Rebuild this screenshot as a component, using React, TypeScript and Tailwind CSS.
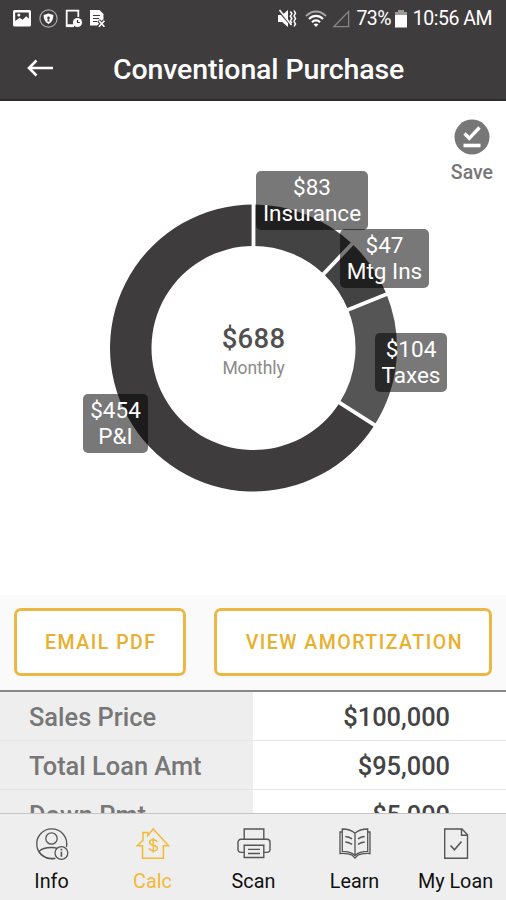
import React from "react";

const FONT = "font-['Roboto','Liberation_Sans',sans-serif]";

interface Slice {
  label: string;
  amount: number;
  color: string;
  place: string;
}

// Drawn clockwise, starting at 12 o'clock
const slices: Slice[] = [
  { label: "Insurance", amount: 83, color: "#434343", place: "left-[256px] top-[70px] w-[112px]" },
  { label: "Mtg Ins", amount: 47, color: "#434343", place: "left-[340px] top-[128px] w-[89px]" },
  { label: "Taxes", amount: 104, color: "#555555", place: "left-[375px] top-[231.5px] w-[72px]" },
  { label: "P&I", amount: 454, color: "#3f3c3d", place: "left-[83px] top-[293px] w-[65px]" },
];

const rows = [
  { label: "Sales Price", value: "$100,000" },
  { label: "Total Loan Amt", value: "$95,000" },
  { label: "Down Pmt", value: "$5,000" },
];

function point(radius: number, turn: number) {
  const angle = turn * Math.PI * 2;
  return `${144.5 + radius * Math.sin(angle)} ${144 - radius * Math.cos(angle)}`;
}

function Donut() {
  const total = slices.reduce((sum, s) => sum + s.amount, 0);
  let start = 0;

  return (
    <svg width="289" height="288" viewBox="0 0 289 288" className="block">
      {slices.map((s) => {
        const from = start;
        const to = start + s.amount / total;
        const large = to - from > 0.5 ? 1 : 0;
        start = to;
        return (
          <path
            key={s.label}
            d={`M${point(143.5, from)}A143.5 143.5 0 ${large} 1 ${point(143.5, to)}L${point(102, to)}A102 102 0 ${large} 0 ${point(102, from)}Z`}
            fill={s.color}
          />
        );
      })}
      {slices.map((s, i) => {
        const turn = slices.slice(0, i).reduce((sum, p) => sum + p.amount, 0) / total;
        return (
          <path key={s.label} d={`M${point(100, turn)}L${point(146, turn)}`} stroke="#fff" strokeWidth="3.8" />
        );
      })}
    </svg>
  );
}

function StatusBar() {
  return (
    <div className="flex h-[37px] items-center justify-between pl-[12px] pr-[14px] text-white">
      <div className="flex items-center gap-[7px]">
        <svg width="20" height="20" viewBox="0 0 20 20">
          <rect x="1" y="1" width="18" height="16.5" rx="1.5" fill="#fff" />
          <path d="M3.2 3.5h13.6v6.2l-2.6-2.4-3.6 3.4-3-2-4.4 3.4Z" fill="#3f3c3d" />
          <circle cx="6.8" cy="6" r="1.5" fill="#fff" />
        </svg>
        <svg width="19" height="20" viewBox="0 0 19 20">
          <circle cx="9.5" cy="9.5" r="8.6" fill="none" stroke="#aaa" strokeWidth="1.2" />
          <path d="M4.6 6.1 9.5 4.5l4.9 1.6c0 4.4-1.6 7.4-4.9 9-3.3-1.6-4.9-4.6-4.9-9Z" fill="#fff" />
          <path d="M8.8 10.3 8.3 12.5h2.4l-.5-2.2Z" fill="#3f3c3d" />
          <circle cx="9.5" cy="8.9" r="1.3" fill="#3f3c3d" />
        </svg>
        <svg width="18" height="20" viewBox="0 0 18 20">
          <path d="M9 16.5H1.7V1.7h11.600V8" fill="none" stroke="#fff" strokeWidth="1.8" />
          <path d="M1 15.5h8v2.6H1z" fill="#fff" />
          <circle cx="12.5" cy="13.5" r="4.6" fill="#fff" />
          <path d="M12.5 11.1v2.4h2.4" fill="none" stroke="#3f3c3d" strokeWidth="1.2" />
        </svg>
        <svg width="18" height="20" viewBox="0 0 18 20">
          <path d="M0 1h9.500l4 4v7l-4 4.500H0Z" fill="#fff" />
          <path d="M3 6.500h7M3 9.500h6M3 12.500h4" stroke="#3f3c3d" strokeWidth="1.2" />
          <path d="m8.500 11.500 6 6.500m0-6.500-6 6.500" stroke="#3f3c3d" strokeWidth="3.6" />
          <path d="m9 11.800 5.400 5.900m0-5.900L9 17.700" stroke="#fff" strokeWidth="1.7" />
        </svg>
      </div>

      <div className="flex items-center pt-[1px]">
        <svg width="20" height="20" viewBox="0 0 20 20" className="mr-[8px]">
          <path d="M1 6h4.200L11 1v17l-5.800-5H1Z" fill="#fff" />
          <path d="M1.500 2 14.500 17" stroke="#3f3c3d" strokeWidth="1.6" />
          <path d="M2.500 1 14.500 16" stroke="#fff" strokeWidth="1.6" />
          <path d="m13.400 2.500 1.500 2.300-1.500 2.400 1.500 2.300-1.500 2.300 1.500 2.400M17 1.500l1.500 2.700L17 6.900l1.500 2.700-1.500 2.700 1.500 2.600-1.500 2.600" fill="none" stroke="#fff" strokeWidth="1.5" />
        </svg>
        <svg width="22" height="18" viewBox="0 0 22 18" className="mr-[5px]">
          <path d="M1 6.200C7-.1 15-.1 21 6.200" fill="none" stroke="#aaa" strokeWidth="1.8" />
          <path d="M4 9c4-4.200 10-4.200 14 0M7 12.200c2.400-2.400 5.600-2.400 8 0" fill="none" stroke="#fff" strokeWidth="2.2" />
          <path d="M8.600 14.200c1.600-1 3.200-1 4.800 0L11 17Z" fill="#fff" />
        </svg>
        <svg width="18" height="18" viewBox="0 0 18 18" className="mr-[6px]">
          <path d="M16.600 1.500v15.200H1.800Z" fill="none" stroke="#878585" strokeWidth="1.3" />
        </svg>
        <span className="text-[19.5px] leading-none tracking-[-0.6px]">73%</span>
        <svg width="12" height="18" viewBox="0 0 12 18" className="ml-[4px] mr-[6px]">
          <path d="M3 0h6v2h3v3.500H0V2h3Z" fill="#9b9999" />
          <path d="M0 5h12v12.500H0Z" fill="#fff" />
        </svg>
        <span className="text-[19.5px] leading-none tracking-[-0.5px]">10:56 AM</span>
      </div>
    </div>
  );
}

function InfoIcon() {
  return (
    <svg width="34" height="34" viewBox="0 0 34 34" fill="none" stroke="currentColor" strokeWidth="1.3">
      <path d="M20.5 31.4A15 15 0 1 1 31.4 20" />
      <circle cx="16.5" cy="11.5" r="5.7" />
      <path d="M5.600 26.600c-1-.8-1.400-1.600-1.400-2.200 2.400-2.800 7-3.900 12.300-3.900 2.600 0 4.400.3 6 .9M5.600 26.600c3.400 3.400 8.400 5.400 14 4.600" />
      <circle cx="26.4" cy="26" r="6.4" />
      <path d="M26.4 24.8v5M26.4 21.8v1.6" strokeWidth="1.6" />
    </svg>
  );
}

function CalcIcon() {
  return (
    <svg width="34" height="34" viewBox="0 0 34 34" fill="none" stroke="currentColor" strokeWidth="1.5">
      <path d="M6.500 18.800H1.400L7 13.300V5.600h4.800v3L17.200 2l15.400 16.800h-5.200v12.500H6.500Z" />
      <path d="M21 15.100c-.4-1.500-1.800-2.400-3.700-2.400-2.200 0-3.800 1.100-3.800 2.700 0 3.800 7.900 1.900 7.900 5.600 0 1.800-1.700 2.900-4 2.900-2.200 0-3.800-1-4.200-2.700M17.200 10.800v15" strokeWidth="1.4" />
    </svg>
  );
}

function ScanIcon() {
  return (
    <svg width="34" height="34" viewBox="0 0 34 34" fill="none" stroke="currentColor" strokeWidth="1.4">
      <path d="M7.200 12.300V2h19.600v10.300" />
      <path d="M7.200 25.400H4a3 3 0 0 1-3-3v-7.100a3 3 0 0 1 3-3h26a3 3 0 0 1 3 3v7.100a3 3 0 0 1-3 3h-3.200" />
      <path d="M7.200 18.200h19.600v12.300H7.200ZM11 22.400h12M11 26.500h12" />
    </svg>
  );
}

function LearnIcon() {
  return (
    <svg width="34" height="34" viewBox="0 0 34 34" fill="none" stroke="currentColor" strokeWidth="1.3">
      <path d="M17 6.200C14 3.500 9.500 2 4.300 2v22.400c5.200 0 9.700 1.300 12.700 4 3-2.700 7.500-4 12.700-4V2C24.500 2 20 3.500 17 6.200ZM17 6.200v22" />
      <path d="M4.300 5H2v21.500c5-.3 9.200.2 12.300 1.700L17 31l2.700-2.800c3.100-1.500 7.300-2 12.300-1.700V5h-2.300" />
      <path d="M7.300 9.500c2.600.3 4.700 1 6.700 2.300M7.300 15c2.600.3 4.700 1 6.700 2.300M26.700 9.500c-2.600.3-4.700 1-6.700 2.300M26.700 15c-2.600.3-4.700 1-6.700 2.300" strokeWidth="1.5" />
    </svg>
  );
}

function LoanIcon() {
  return (
    <svg width="34" height="34" viewBox="0 0 34 34" fill="none" stroke="currentColor" strokeWidth="1.4">
      <path d="M5.700 2h17.300l5.500 5.700v23.600H5.700Z" />
      <path d="M22.500 2v6.200h6" />
      <path d="m11.500 18.500 4 4.200 7-8.200" strokeWidth="1.6" />
    </svg>
  );
}

const tabs = [
  { label: "Info", icon: InfoIcon },
  { label: "Calc", icon: CalcIcon, active: true },
  { label: "Scan", icon: ScanIcon },
  { label: "Learn", icon: LearnIcon },
  { label: "My Loan", icon: LoanIcon },
];

export default function App() {
  return (
    <div className={`flex h-[900px] w-[506px] flex-col overflow-hidden bg-white ${FONT}`}>
      <header className="h-[101px] shrink-0 border-b-2 border-[#2f2d2d] bg-[#3f3c3d]">
        <StatusBar />
        <div className="flex h-[62px] items-center pl-[26px] text-white">
          <svg width="28" height="18" viewBox="0 0 28 18" fill="none" stroke="#fff" strokeWidth="2.6">
            <path d="M27 9H3M10.5 1.5 3 9l7.5 7.5" />
          </svg>
          <h1 className="ml-[59px] whitespace-nowrap pt-[5px] text-[28.5px] font-medium leading-none tracking-[-0.14px]">
            Conventional Purchase
          </h1>
        </div>
      </header>

      <main className="flex min-h-0 flex-1 flex-col">
        <section className="relative h-[494px] shrink-0 pl-[109px] pt-[103px]">
          <div className="relative h-[288px] w-[289px]">
            <Donut />
            <div className="absolute inset-0 flex flex-col items-center pt-[120px]">
              <span className="text-[27.5px] font-medium leading-[30px] tracking-[0.3px] text-[#505050]">$688</span>
              <span className="mt-[4px] text-[17.5px] leading-[20px] tracking-[-0.1px] text-[#8a8a8a]">Monthly</span>
            </div>
          </div>
          {slices.map((s) => (
            <div
              key={s.label}
              className={`absolute flex h-[59px] flex-col items-center rounded-[5px] bg-black/53 pt-[3px] text-[22.5px] leading-[26px] text-white ${s.place}`}
            >
              <span>${s.amount}</span>
              <span className="whitespace-nowrap">{s.label}</span>
            </div>
          ))}
          <button className="absolute right-[13px] top-[18px] flex flex-col items-center text-[#777]">
            <svg width="36" height="36" viewBox="0 0 36 36">
              <circle cx="18" cy="18" r="17.5" fill="#777" />
              <path d="m10.5 14.5 4.8 4.8L25.5 8.5" fill="none" stroke="#fff" strokeWidth="3.4" />
              <path d="M9.5 26.500h17" stroke="#fff" strokeWidth="3.6" />
            </svg>
            <span className="mt-[7px] text-[19.5px] font-medium leading-[22px]">Save</span>
          </button>
        </section>

        <div className="flex h-[95px] shrink-0 gap-[28px] bg-[#fafafa] px-[14px] pt-[13px] text-[19.5px] font-medium text-[#e8b02c]">
          <button className="h-[68px] w-[172px] rounded-[7px] border-[3px] border-[#ebb845] bg-white pl-[2px] pt-[2px] tracking-[1.5px]">
            EMAIL PDF
          </button>
          <button className="h-[68px] w-[279px] rounded-[7px] border-[3px] border-[#ebb845] bg-white pl-[3px] pt-[2px] tracking-[1.5px]">
            VIEW AMORTIZATION
          </button>
        </div>

        <div className="min-h-0 flex-1 overflow-hidden border-t-2 border-[#888]">
          {rows.map((row) => (
            <div key={row.label} className="flex h-[49px] border-b border-[#e6e6e6] text-[25.4px] font-medium">
              <div className="flex w-[253px] items-center bg-[#eee] pl-[29px] pt-[2px] text-[#777]">{row.label}</div>
              <div className="flex flex-1 items-center justify-end pr-[56px] pt-[2px] text-[#444]">{row.value}</div>
            </div>
          ))}
        </div>
      </main>

      <nav className="grid h-[87px] shrink-0 grid-cols-5 border-t border-[#c4c4c4] bg-[#eee] pl-[1px]">
        {tabs.map(({ label, icon: Icon, active }) => (
          <button
            key={label}
            className={`flex flex-col items-center pt-[13px] ${active ? "text-[#f3b936]" : "text-[#555]"}`}
          >
            <Icon />
            <span
              className={`mt-[10px] whitespace-nowrap text-[19.8px] leading-[22px] ${active ? "text-[#f3b936]" : "text-[#111]"}`}
            >
              {label}
            </span>
          </button>
        ))}
      </nav>
    </div>
  );
}
